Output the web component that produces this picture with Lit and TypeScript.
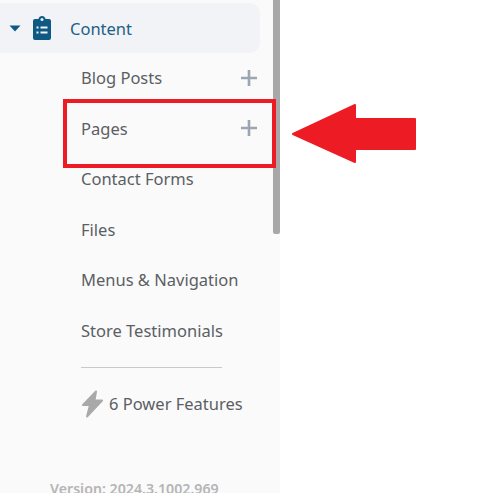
import { LitElement, html, css } from "lit";
import { customElement } from "lit/decorators.js";

const plus = html`<svg class="plus" viewBox="0 0 18 18" width="18" height="18"><path d="M9 1v16M1 9h16" stroke="#9ba6b0" stroke-width="2.6" fill="none" /></svg>`;

@customElement("app-root")
export class AppRoot extends LitElement {
  static styles = css`
    :host {
      display: block;
      position: relative;
      width: 485px;
      height: 493px;
      overflow: hidden;
      background: #fff;
      font-family: "Noto Sans", "Lato", sans-serif;
    }
    .sidebar {
      display: flex;
      width: 280px;
      height: 493px;
      background: #fafafa;
      overflow: hidden;
    }
    .nav {
      display: flex;
      flex-direction: column;
      flex: 1;
      min-width: 0;
      padding-top: 3px;
    }
    .scroll {
      width: 7px;
      flex: none;
    }
    .thumb {
      height: 234px;
      background: #a8a8a8;
      border-radius: 0 0 2px 2px;
    }
    .head {
      display: flex;
      align-items: center;
      flex: none;
      width: 260px;
      height: 50px;
      background: #f1f3f6;
      border-radius: 0 10px 10px 0;
      color: #1d6187;
      font-size: 16.5px;
    }
    .caret {
      margin-left: 9px;
      flex: none;
    }
    .clip {
      margin-left: 12px;
      flex: none;
    }
    .head span {
      margin-left: 19px;
    }
    .items {
      margin-top: 0.3px;
    }
    .item {
      display: flex;
      align-items: center;
      justify-content: space-between;
      box-sizing: border-box;
      height: 50.5px;
      padding: 0 15px 2px 81px;
      color: #5a5f64;
      font-size: 16.5px;
    }
    .plus {
      flex: none;
    }
    .rule {
      flex: none;
      width: 141px;
      height: 1px;
      margin: 10.7px 0 0 81px;
      background: #c9c9c9;
    }
    .power {
      display: flex;
      align-items: center;
      flex: none;
      gap: 5px;
      margin: 21px 0 0 81px;
      height: 30px;
      color: #5a5f64;
      font-size: 16.5px;
      white-space: nowrap;
    }
    .version {
      margin: auto 0 -2px 50px;
      color: #b5b5b5;
      font-size: 14.2px;
      font-weight: 600;
      line-height: 12px;
      white-space: nowrap;
    }
    .callout {
      position: absolute;
      left: 63px;
      top: 99px;
      width: 213px;
      height: 69px;
      box-sizing: border-box;
      border: 4px solid #ed1c24;
    }
    .arrow {
      position: absolute;
      left: 285px;
      top: 98px;
    }
  `;

  render() {
    const items = ["Blog Posts", "Pages", "Contact Forms", "Files", "Menus & Navigation", "Store Testimonials"];
    return html`
      <div class="sidebar">
        <div class="nav">
          <div class="head">
            <svg class="caret" width="12" height="7" viewBox="0 0 12 7"><path d="M0.5 0.5h11L6 6.5z" fill="#0f5a85" /></svg>
            <svg class="clip" width="18" height="24" viewBox="0 0 18 24">
              <path fill="#0f5a85" d="M2 3h3.4C5.9 1.3 7.3 0 9 0s3.100 1.300 3.600 3H16a2 2 0 0 1 2 2v17a2 2 0 0 1-2 2H2a2 2 0 0 1-2-2V5a2 2 0 0 1 2-2z" />
              <circle cx="9" cy="3.600" r="1.500" fill="#f1f3f6" />
              <path d="M3.500 11.500h2M7.500 11.500h7M3.500 16.500h2M7.500 16.500h7" stroke="#f1f3f6" stroke-width="2" fill="none" />
            </svg>
            <span>Content</span>
          </div>
          <div class="items">
            ${items.map((t, i) => html`<div class="item"><span>${t}</span>${i < 2 ? plus : null}</div>`)}
          </div>
          <div class="rule"></div>
          <div class="power">
            <svg width="23" height="28" viewBox="0 0 23 28"><path fill="#a9a9a9" stroke="#a9a9a9" stroke-width="2" stroke-linejoin="round" d="M15 1.500L2 15h7L6 26.500 21 10.500h-7.500z" /></svg>
            <span>6 Power Features</span>
          </div>
          <div class="version">Version: 2024.3.1002.969</div>
        </div>
        <div class="scroll"><div class="thumb"></div></div>
      </div>
      <div class="callout"></div>
      <svg class="arrow" width="135" height="70" viewBox="0 0 135 70">
        <path fill="#ed1c24" stroke="#ed1c24" stroke-width="2" stroke-linejoin="round" d="M8 36L70 7V21H130V51H70V64z" />
      </svg>
    `;
  }
}
